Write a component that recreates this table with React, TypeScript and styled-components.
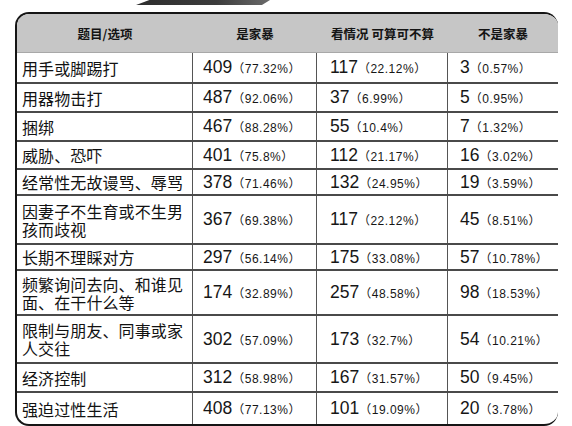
import React from "react";
import styled, { createGlobalStyle } from "styled-components";

const GlobalStyle = createGlobalStyle`
  html, body { margin: 0; padding: 0; background: #ffffff; }
  body { font-family: "Liberation Sans", "Noto Sans CJK SC", sans-serif; }
`;

const Page = styled.div`
  width: 572px;
  height: 426px;
  padding-left: 15px;
  box-sizing: border-box;
  overflow: hidden;
  background: #fff;
`;

const TopStrip = styled.div`
  height: 12px;
  display: flex;
  align-items: flex-start;
`;

const Tab = styled.div`
  margin-left: 121px;
  width: 134px;
  height: 5px;
  background: linear-gradient(90deg, #2e2e2e 0%, #3c3c3c 60%, #6a6a6a 100%);
  clip-path: polygon(10% 0, 100% 0, 94% 100%, 0 100%);
`;

const Table = styled.div`
  width: 543px;
  box-sizing: border-box;
  border: 2px solid #151515;
  border-right: 0;
  border-radius: 14px;
  overflow: hidden;
  background: #fff;
`;

const cols = "176px 124px 131px 1fr";

const Header = styled.div`
  display: grid;
  grid-template-columns: ${cols};
  height: 38px;
  background: #c6c6c6;
  border-bottom: 1px solid #a8a8a8;
`;

const HeadCell = styled.div`
  display: flex;
  align-items: center;
  justify-content: center;
  font-family: "Noto Sans CJK SC", sans-serif;
  font-weight: 700;
  font-size: 12.5px;
  color: #141414;
  white-space: pre;
`;

const Row = styled.div<{ $h: number; $last?: boolean }>`
  display: grid;
  grid-template-columns: ${cols};
  height: ${(p) => p.$h}px;
  box-sizing: border-box;
  border-bottom: ${(p) => (p.$last ? "0" : "2px solid #4a4a4a")};
`;

const ItemCell = styled.div`
  display: flex;
  align-items: center;
  padding: 0 8px 0 5px;
  border-right: 1.5px solid #555;
  font-family: "Noto Sans CJK SC", sans-serif;
  font-size: 16px;
  line-height: 18px;
  letter-spacing: 0.1px;
  color: #121212;
`;

const ValueCell = styled.div<{ $pl: number; $edge?: boolean }>`
  display: flex;
  align-items: center;
  padding-left: ${(p) => p.$pl}px;
  border-right: ${(p) => (p.$edge ? "0" : "1.5px solid #555")};
  white-space: nowrap;
  color: #161616;
`;

const Count = styled.span`
  font-family: "Liberation Sans", Arial, sans-serif;
  font-size: 17.5px;
`;

const Pct = styled.span`
  font-family: "Liberation Sans", "Noto Sans CJK SC", sans-serif;
  font-size: 12px;
  letter-spacing: 0.5px;
  color: #161616;
`;

type Val = [string, string];
type RowData = { label: string; h: number; v: [Val, Val, Val] };

const rows: RowData[] = [
  { label: "用手或脚踢打", h: 31, v: [["409", "77.32%"], ["117", "22.12%"], ["3", "0.57%"]] },
  { label: "用器物击打", h: 29, v: [["487", "92.06%"], ["37", "6.99%"], ["5", "0.95%"]] },
  { label: "捆绑", h: 29, v: [["467", "88.28%"], ["55", "10.4%"], ["7", "1.32%"]] },
  { label: "威胁、恐吓", h: 28, v: [["401", "75.8%"], ["112", "21.17%"], ["16", "3.02%"]] },
  { label: "经常性无故谩骂、辱骂", h: 26, v: [["378", "71.46%"], ["132", "24.95%"], ["19", "3.59%"]] },
  { label: "因妻子不生育或不生男孩而歧视", h: 49, v: [["367", "69.38%"], ["117", "22.12%"], ["45", "8.51%"]] },
  { label: "长期不理睬对方", h: 26, v: [["297", "56.14%"], ["175", "33.08%"], ["57", "10.78%"]] },
  { label: "频繁询问去向、和谁见面、在干什么等", h: 45, v: [["174", "32.89%"], ["257", "48.58%"], ["98", "18.53%"]] },
  { label: "限制与朋友、同事或家人交往", h: 48, v: [["302", "57.09%"], ["173", "32.7%"], ["54", "10.21%"]] },
  { label: "经济控制", h: 29, v: [["312", "58.98%"], ["167", "31.57%"], ["50", "9.45%"]] },
  { label: "强迫过性生活", h: 31, v: [["408", "77.13%"], ["101", "19.09%"], ["20", "3.78%"]] },
];

const pads = [10, 13, 12];

export default function App() {
  return (
    <Page>
      <GlobalStyle />
      <TopStrip>
        <Tab />
      </TopStrip>
      <Table>
        <Header>
          <HeadCell>题目/选项</HeadCell>
          <HeadCell>是家暴</HeadCell>
          <HeadCell>看情况 可算可不算</HeadCell>
          <HeadCell>不是家暴</HeadCell>
        </Header>
        {rows.map((r, i) => (
          <Row key={r.label} $h={r.h} $last={i === rows.length - 1}>
            <ItemCell>{r.label}</ItemCell>
            {r.v.map(([n, p], j) => (
              <ValueCell key={j} $pl={pads[j]} $edge={j === 2}>
                <Count>{n}</Count>
                <Pct>（{p}）</Pct>
              </ValueCell>
            ))}
          </Row>
        ))}
      </Table>
    </Page>
  );
}
